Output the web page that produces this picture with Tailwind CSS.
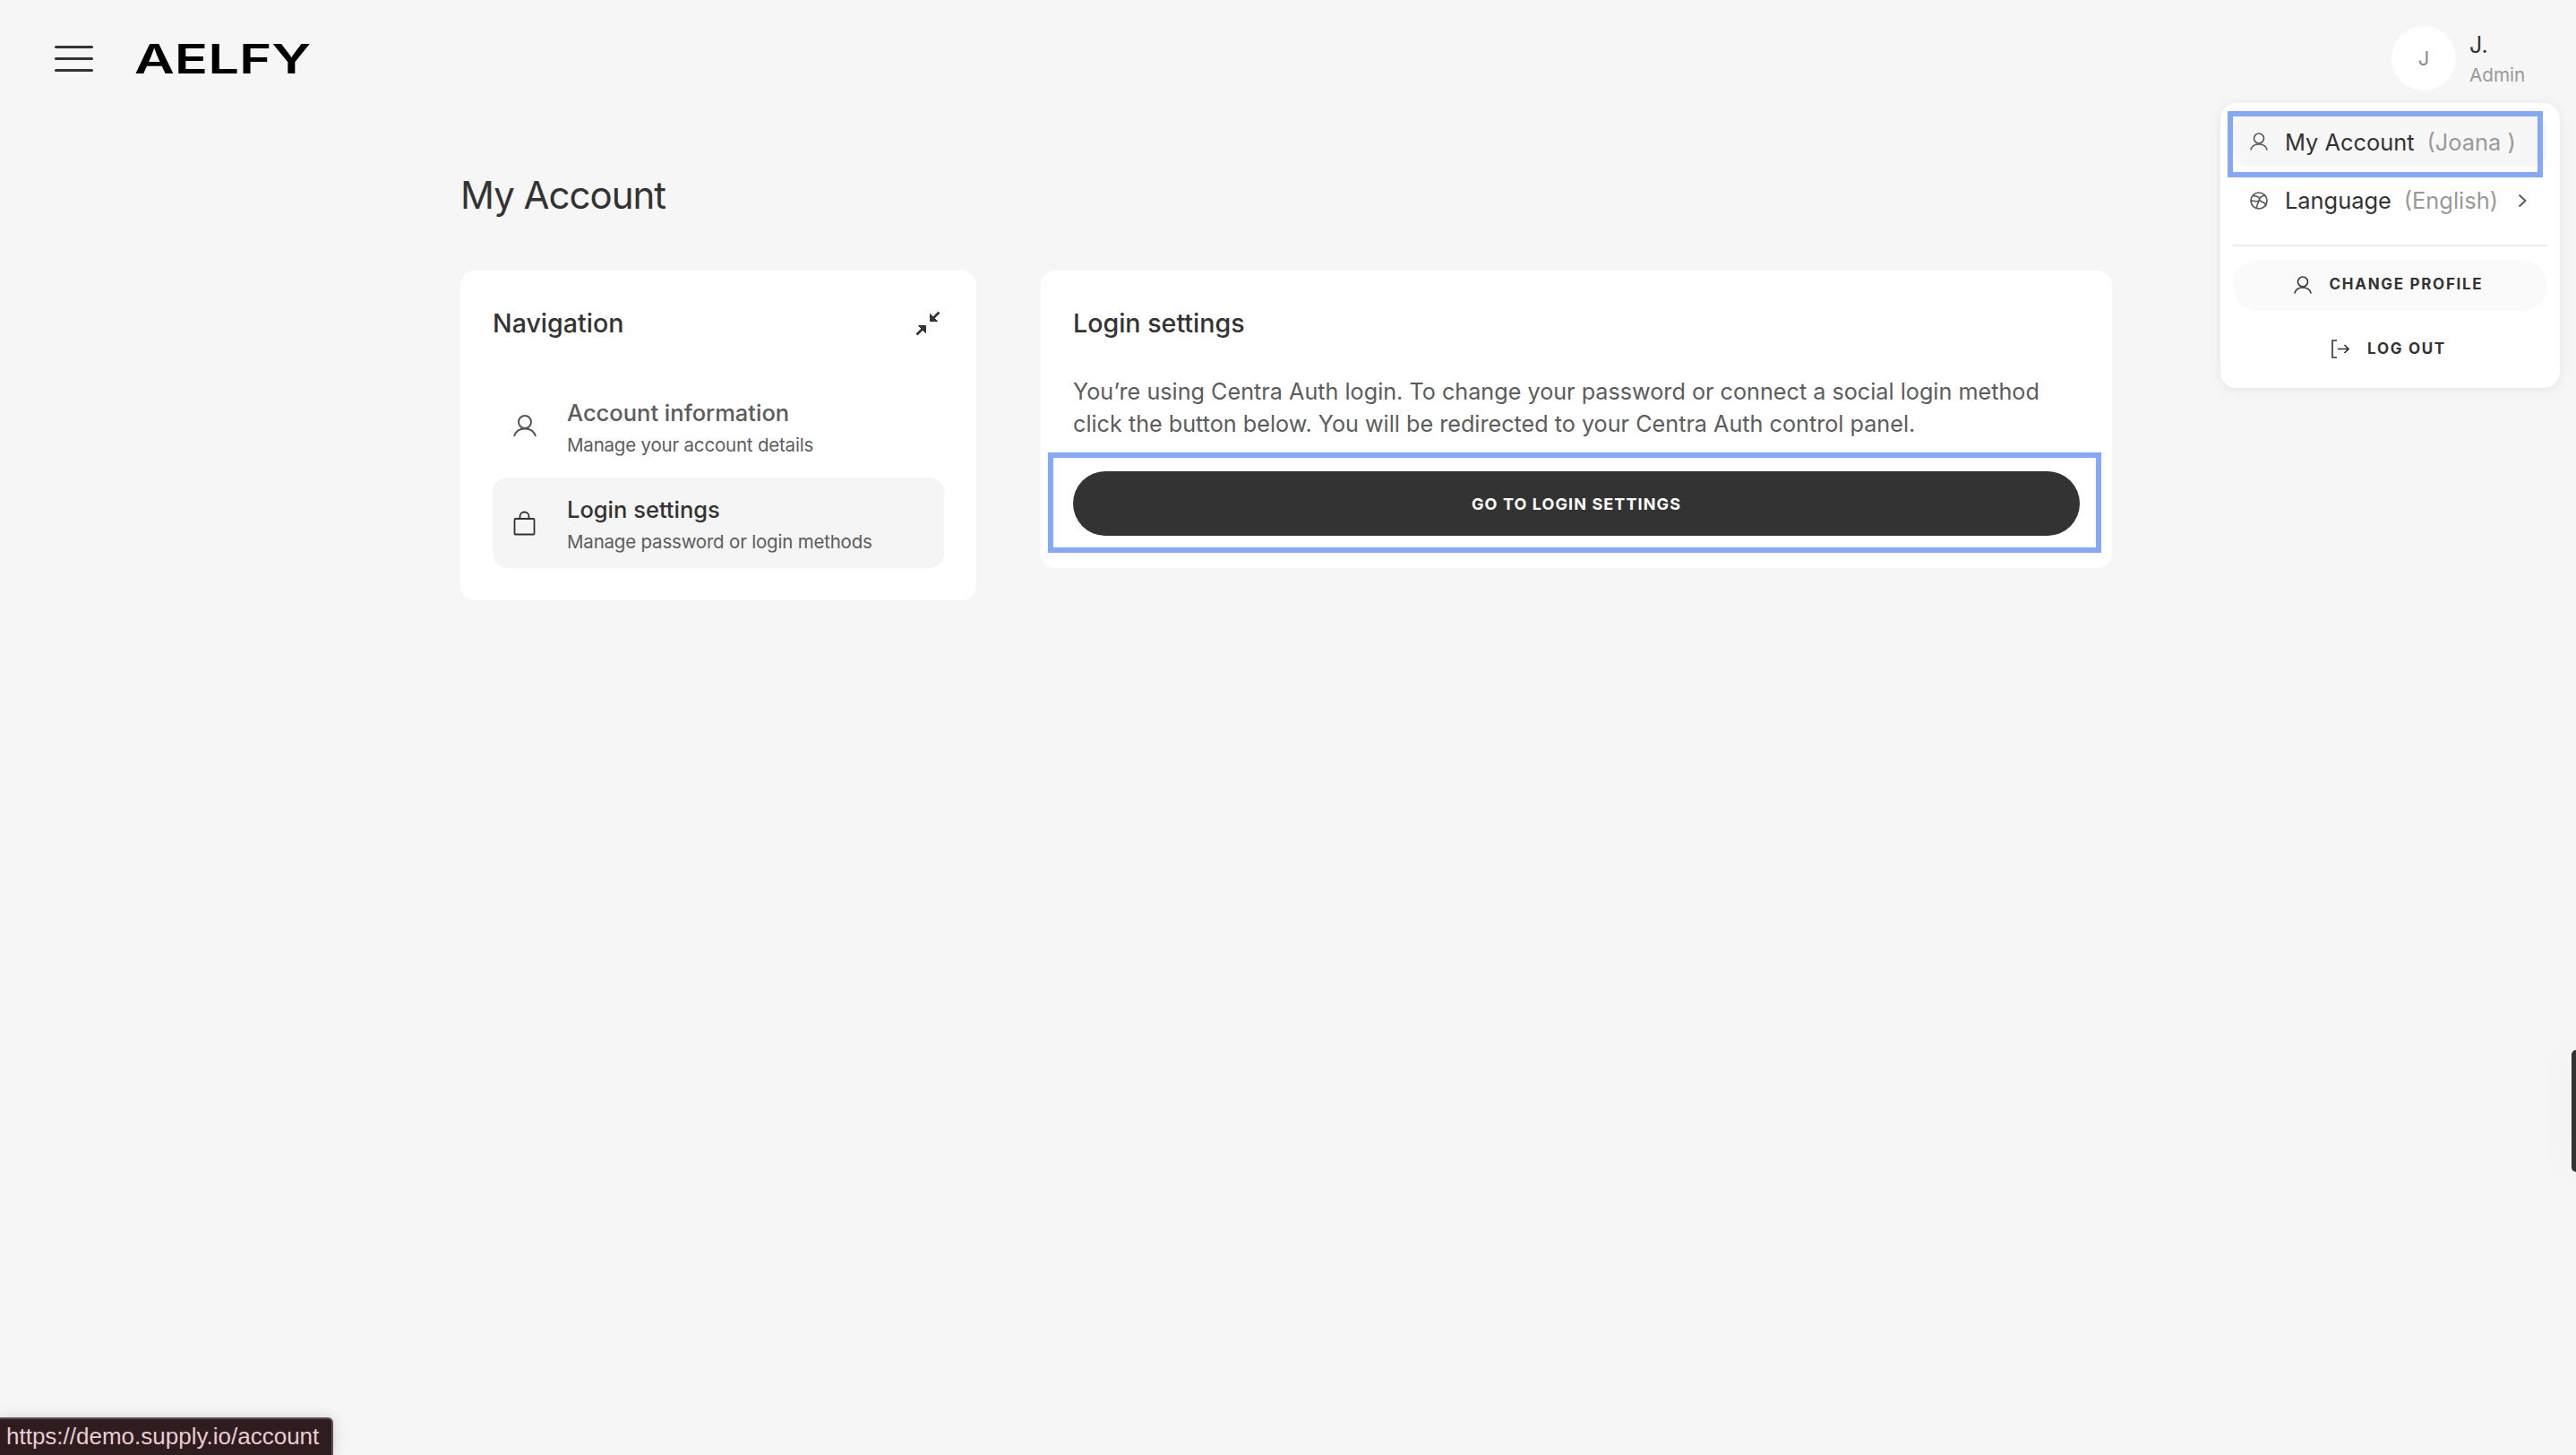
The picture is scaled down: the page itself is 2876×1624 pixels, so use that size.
<!DOCTYPE html>
<html lang="en">
  <head>
    <title>My Account</title>
    <script src="https://cdn.jsdelivr.net/npm/@tailwindcss/browser@4"></script>
    <meta name="viewport" content="width=device-width, initial-scale=1.0">
  </head>

  <body class="relative w-[2876px] h-[1624px] overflow-hidden bg-[#f6f6f6] font-['Inter',sans-serif] text-[#333333]">
    <!-- top bar -->
    <header class="flex items-center justify-between h-[130px] pl-[61px] pr-[58px]">
      <div class="flex items-center gap-[46px]">
        <button class="flex flex-col justify-between w-[43px] h-[29px]">
          <span class="block h-[3px] rounded-full bg-[#333333]"></span>
          <span class="block h-[3px] rounded-full bg-[#333333]"></span>
          <span class="block h-[3px] rounded-full bg-[#333333]"></span>
        </button>
        <div class="w-[194px] origin-left scale-x-[1.37] text-[45px] leading-[45px] font-semibold text-black whitespace-nowrap">AELFY</div>
      </div>
      <div class="flex items-center gap-[15px]">
        <div class="flex items-center justify-center w-[72px] h-[72px] rounded-full bg-white text-[22px] text-[#8a8a8a]">J</div>
        <div class="w-[61px]">
          <div class="text-[25px] leading-[36px] text-[#333333]">J.</div>
          <div class="mt-[1px] text-[20.7px] leading-[30px] text-[#999999]">Admin</div>
        </div>
      </div>
    </header>

    <main class="pl-[514px]">
      <h1 class="text-[42px] leading-[56px] mt-[60px] mb-[56px] tracking-[-1px]">My Account</h1>
      <div class="flex items-start gap-[72px]">
        <!-- navigation card -->
        <section class="w-[576px] h-[368px] rounded-[16px] bg-white px-[36px] pt-[39px]">
          <div class="flex items-center justify-between h-[40px] pr-[4px]">
            <h2 class="text-[28.6px] leading-[40px] font-medium">Navigation</h2>
            <svg class="w-[28px] h-[28px]" viewBox="0 0 28 28" fill="#333333" stroke="#333333" stroke-width="2.600">
              <path d="M26.500 1.500L20 8" fill="none"/>
              <path d="M16.500 3.500v8h8z" stroke-width="1"/>
              <path d="M1.500 26.500L8 20" fill="none"/>
              <path d="M3.500 16.500h8v8z" stroke-width="1"/>
            </svg>
          </div>
          <div class="mt-[43px] flex flex-col gap-[8px]">
            <a class="flex items-center h-[101px] rounded-[16px] pl-[23px]">
              <svg class="w-[26px] h-[26px] shrink-0" viewBox="0 0 26 26" fill="none" stroke="#555555" stroke-width="2">
                <circle cx="13" cy="9" r="7"/>
                <path d="M1 25c1.500-5 5-8.500 12-8.500s10.500 3.500 12 8.500"/>
              </svg>
              <div class="ml-[34px] mt-[6px]">
                <div class="text-[25.5px] leading-[38px] font-medium text-[#5c5c5c]">Account information</div>
                <div class="text-[20.5px] leading-[34px] tracking-[-0.2px] text-[#5c5c5c]">Manage your account details</div>
              </div>
            </a>
            <a class="flex items-center h-[101px] rounded-[16px] bg-[#f5f5f5] pl-[23px]">
              <svg class="w-[26px] h-[28px] shrink-0" viewBox="0 0 26 28" fill="none" stroke="#333333" stroke-width="1.800">
                <rect x="1.500" y="9" width="22" height="17.500" rx="1"/>
                <path d="M7.500 9V6.500a5 5 0 0 1 10 0V9"/>
              </svg>
              <div class="ml-[34px] mt-[5px]">
                <div class="text-[25.5px] leading-[38px] font-medium text-[#333333]">Login settings</div>
                <div class="text-[20.5px] leading-[34px] tracking-[-0.2px] text-[#5c5c5c]">Manage password or login methods</div>
              </div>
            </a>
          </div>
        </section>

        <!-- login settings card -->
        <section class="w-[1196px] h-[332px] rounded-[16px] bg-white px-[36px] pt-[39px]">
          <h2 class="text-[28.6px] leading-[40px] font-medium">Login settings</h2>
          <p class="mt-[38px] text-[25.2px] leading-[36px] text-[#5c5c5c]">You’re using Centra Auth login. To change your password or connect a social login method<br>click the button below. You will be redirected to your Centra Auth control panel.</p>
          <div class="relative mt-[35px]">
            <button class="block w-full h-[72px] rounded-full bg-[#333333] text-[18px] font-bold tracking-[1.1px] text-white">GO TO LOGIN SETTINGS</button>
            <div class="absolute left-[-28px] right-[-24px] top-[-21px] bottom-[-19px] border-[6px] border-[#86a8fb]"></div>
          </div>
        </section>
      </div>
    </main>

    <!-- account dropdown -->
    <div class="absolute left-[2479px] top-[115px] w-[379px] h-[318px] rounded-[18px] bg-white px-[14px] pt-[15px] shadow-[0_2px_16px_rgba(0,0,0,0.07)]">
      <div class="relative flex items-center h-[56px] rounded-[16px] bg-[#f7f7f7] pl-[19px]">
        <svg class="w-[20px] h-[20px] shrink-0" viewBox="0 0 20 20" fill="none" stroke="#555555" stroke-width="1.600">
          <circle cx="10" cy="6.500" r="5.500"/>
          <path d="M0.800 19.500c1-4 4-6.500 9.200-6.500s8.200 2.500 9.200 6.500"/>
        </svg>
        <span class="ml-[19px] pt-[2px] text-[25.4px] text-[#333333]">My Account</span>
        <span class="ml-[14px] pt-[2px] text-[25.4px] text-[#999999]">(Joana )</span>
        <div class="absolute left-[-6px] top-[-6px] w-[352px] h-[74px] border-[6px] border-[#86a8fb]"></div>
      </div>
      <div class="flex items-center h-[56px] mt-[10px] pl-[19px]">
        <svg class="w-[20px] h-[20px] shrink-0" viewBox="0 0 20 20" fill="none" stroke="#555555" stroke-width="1.600">
          <circle cx="10" cy="10" r="9"/>
          <path d="M3 4c2 1 5 .5 7 2.500s0 4-2 4.200-4.500-1-6.800-.4M16.500 3.800c-2.500 1-5 1.500-6 4s3 3.500 5 4.500 2.500 3 2 4M7.500 18.500c0-2.500 .5-5 2.500-7.500"/>
        </svg>
        <span class="ml-[19px] text-[25.4px] text-[#333333]">Language</span>
        <span class="ml-[14px] text-[25.4px] text-[#999999]">(English)</span>
        <svg class="ml-[22px] w-[10px] h-[16px]" viewBox="0 0 10 16" fill="none" stroke="#555555" stroke-width="1.800"><path d="M1.500 1.500l7 6.500-7 6.500"/></svg>
      </div>
      <div class="h-[2px] mt-[21px] bg-[#eeeeee]"></div>
      <button class="flex items-center justify-center w-full h-[57px] mt-[15px] pr-[4px] pb-[2px] rounded-full bg-[#fafafa]">
        <svg class="w-[20px] h-[20px] shrink-0" viewBox="0 0 20 20" fill="none" stroke="#333333" stroke-width="1.600">
          <circle cx="10" cy="6.500" r="5.500"/>
          <path d="M0.800 19.500c1-4 4-6.500 9.200-6.500s8.200 2.500 9.200 6.500"/>
        </svg>
        <span class="ml-[20px] text-[17px] font-bold tracking-[1.700px]">CHANGE PROFILE</span>
      </button>
      <button class="flex items-center justify-center w-full h-[57px] mt-[14px] pr-[4px]">
        <svg class="w-[21px] h-[21px] shrink-0" viewBox="0 0 21 21" fill="none" stroke="#333333" stroke-width="1.600">
          <path d="M7 1H2v19h5M8 10.500h12M15.500 6l4.500 4.500-4.500 4.500"/>
        </svg>
        <span class="ml-[20px] text-[17px] font-bold tracking-[1.700px]">LOG OUT</span>
      </button>
    </div>

    <!-- side handle -->
    <div class="absolute right-0 top-[1172px] w-[5px] h-[136px] rounded-l-[10px] bg-[#333333] shadow-[0_0_40px_rgba(0,0,0,0.12)]"></div>

    <!-- browser status bubble -->
    <div class="absolute left-0 bottom-0 w-[372px] h-[42px] rounded-tr-[6px] border-t-2 border-r-2 border-[#5a5053] bg-[#2e1c1f] pl-[7px] font-['Liberation_Sans',sans-serif] text-[26px] leading-[38px] text-[#e8cdd2] whitespace-nowrap shadow-[0_0_16px_rgba(0,0,0,0.15)]">https://demo.supply.io/account</div>
  </body>
</html>
